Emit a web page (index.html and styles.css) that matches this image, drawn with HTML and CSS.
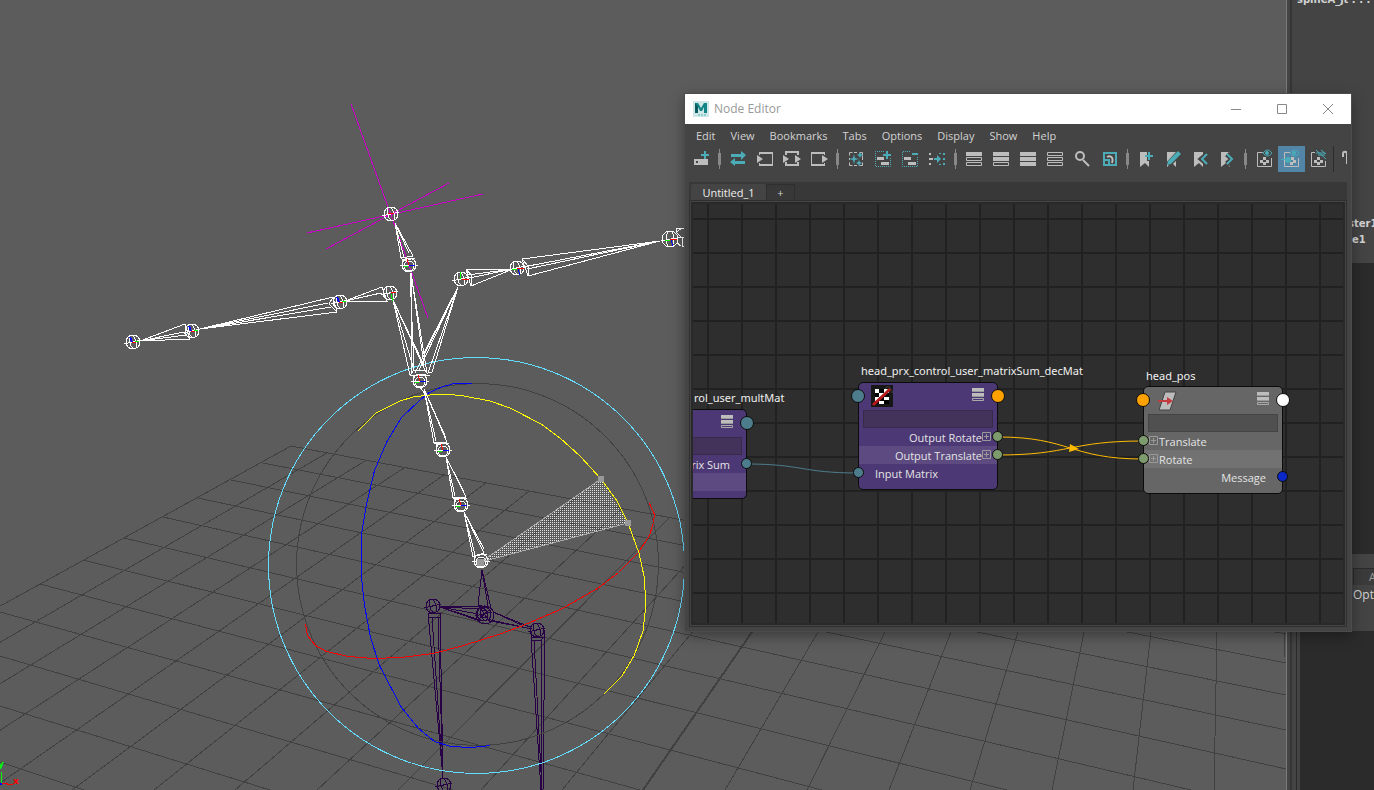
FILE: index.html
```html
<!DOCTYPE html>
<html lang="en">
<head>
<meta charset="utf-8">
<title>Node Editor</title>
<link rel="stylesheet" href="styles.css">
</head>
<body>
<svg class="defs" aria-hidden="true">
  <symbol id="joint" viewBox="-10 -10 20 20">
    <circle r="7"/><ellipse rx="3" ry="7" transform="rotate(-14)"/><path d="M-9 2L8-2"/>
  </symbol>
  <symbol id="knuckle" viewBox="-10 -10 20 20">
    <circle r="7"/><circle cy="1" r="5"/><path d="M-9 0H9M-7-5L6-7M-7-5V2"/>
  </symbol>
  <symbol id="axis" viewBox="-10 -10 20 20">
    <path d="M-1 0L-3-5" stroke="#00f" stroke-width="2"/><path d="M-1 0H3" stroke="#f00"/><path d="M2-1H6" stroke="#0f0"/>
  </symbol>
  <symbol id="axis-up" viewBox="-10 -10 20 20">
    <path d="M0 0L-2-6" stroke="#f00"/><path d="M-5 1H-1" stroke="#0f0"/><path d="M0 0H6" stroke="#00f"/>
  </symbol>
  <symbol id="axis-right" viewBox="-10 -10 20 20">
    <path d="M1 1L3 7" stroke="#00f"/><path d="M0 0H7" stroke="#f00"/><path d="M-5 1H0" stroke="#0f0"/>
  </symbol>
  <symbol id="rows" viewBox="0 0 14 14">
    <path d="M1 0h12v3H1zM1 5h12v3H1z" fill="#bdbdbd"/><path d="M1 3h12v1H1zM1 8h12v1H1z" fill="#999"/><path d="M1.500 10.500h11v2h-11z" fill="none" stroke="#aaa"/>
  </symbol>
  <symbol id="plus" viewBox="0 0 10 10">
    <path d="M.5.5h8v8h-8zM4.500 2v5M2 4.500h5" fill="none" stroke="#999"/>
  </symbol>
</svg>

<main class="app">
  <section class="viewport" aria-label="Perspective view">
    <svg class="scene" width="1286" height="790" viewBox="0 0 1286 790">
      <defs>
        <pattern id="dots" width="2" height="2" patternUnits="userSpaceOnUse"><path d="M0 0h1v1H0z" fill="#e2e2e2"/></pattern>
      </defs>
      <g class="floor">
        <path d="M291 446L1286 634M263 463L1286 663M231 480L1286 695M198 498L1286 730M163 517L1286 769M124 538L1191 790M83 560L1007 790M40 584L822 790M0 612L640 790M0 656L453 790M0 706L270 790M0 762L84 790"/>
        <path d="M291 446L-47 632M327 453L-255 790M365 461L-174 790M404 468L-92 790M444 475L-10 790M486 483L72 790M529 491L154 790M574 500L235 790M621 509L317 790M669 518L398 790M719 528L481 790M770 538L562 790M818 632L725 790M885 632L807 790M951 632L889 790M1018 632L970 790M1084 632L1052 790M1151 632L1133 790M1217 632L1214 790M1284 632L1285 657"/>
        <path class="bold" d="M752 632L643 790"/>
      </g>
      <g class="leg">
        <use href="#joint" x="423" y="596" width="20" height="20"/>
        <use href="#joint" x="474" y="604" width="20" height="20"/>
        <use href="#joint" x="527" y="620" width="20" height="20"/>
        <use href="#joint" x="434" y="775" width="20" height="20"/>
        <circle cx="484" cy="614" r="4"/><circle cx="485" cy="615" r="9"/>
        <path d="M482 570L478 605L491 608zM482 570L488 606M478 605L490 622M491 608L478 620M440 607L484 606L484 609L440 607L474 618L480 621zM440 607L478 614M493 612L530 627M491 621L532 629L486 619M493 612L524 626"/>
        <path d="M428 613H440V617H428zM428 613L443 778M432 617L443 778L440 613M438 617L443 778M531 637H544L541 640H532zM531 637L541 790M534 640L542 790M541 640L542 790M544 637V700L543 790M532 632L531 637M544 630V637"/>
      </g>
      <g transform="translate(.5 .5)">
        <circle class="ring dark" cx="477" cy="564" r="181"/>
        <circle class="ring cyan" cx="476" cy="565" r="208"/>
        <path class="ring red" d="M305 624L307 635L315 645L326 651L348 656L372 658L400 657L433 653L463 645L498 634L520 626L560 609L597 588L618 572L638 552L649 535L653 522L654 514L649 503"/>
        <path class="ring blue" d="M471 383L453 383L440 387L427 393L419 400L401 417L386 442L374 470L366 504L361 534L361 577L364 605L370 637L379 665L391 688L401 707L418 728L434 741L450 746L471 747L490 745"/>
      </g>
      <path class="ring yellow" d="M358 431L376 413L400 401L413 397L430 395L445 394L464 396L490 401L510 408L541 424L560 438L580 456L601 479L617 501L628 523L639 553L644 576L646 604L643 631L634 656L622 676L604 694"/>
      <path class="control" d="M351 104L428 318M307 233L483 194M326 249L449 183"/>
      <g class="bone">
        <path d="M140 341L185 324L190 339zM140 341L184 332L186 335zM185 324L187 331L190 339"/>
        <path d="M200 329L333 297L337 312zM200 329L328 303M200 329L331 307M333 297L329 304L337 312"/>
        <path d="M345 301L382 287L387 301zM345 301L381 293L384 296M382 287L384 293L387 301"/>
        <path d="M393 300L410 375L414 370zM393 300L423 363M393 300L426 372M410 375H430M413 370H427"/>
        <path d="M411 273L412 373M411 273L424 365M410 273L414 370M411 273L427 373"/>
        <path d="M458 287L419 370M458 287L424 353M458 287L428 373L432 372zM458 287L415 373"/>
        <path d="M395 223L401 258L413 256zM395 223L404 258M395 223L409 253M401 258L404 261L414 258"/>
        <path d="M513 269L466 269L471 286zM513 269L469 278M513 269L468 275M466 269L472 276L471 286"/>
        <path d="M660 241L522 259L528 276zM660 241L523 267M660 241L527 269M522 259L529 267L528 276"/>
        <path d="M676 228H685M676 228V232L682 238V246H685M676 232L681 229M677 237H685M677 243L681 246"/>
        <path d="M424 389L434 443L447 442zM424 389L436 441M424 389L446 438M434 443H447"/>
        <path d="M446 457L453 498L466 497zM446 457L455 496M446 457L464 492M453 498H465"/>
        <path d="M464 512L473 557L484 553zM464 512L475 555M464 512L484 549M420 387L425 394"/>
        <use href="#joint" x="123" y="332" width="20" height="20"/>
        <use href="#joint" x="182" y="321" width="20" height="20"/>
        <use href="#joint" x="330" y="292" width="20" height="20"/>
        <use href="#joint" x="380" y="283" width="20" height="20"/>
        <use href="#joint" x="381" y="204" width="20" height="20"/>
        <use href="#knuckle" x="399" y="255" width="20" height="20"/>
        <use href="#knuckle" x="410" y="371" width="20" height="20"/>
        <use href="#joint" x="451" y="269" width="20" height="20"/>
        <use href="#joint" x="507" y="258" width="20" height="20"/>
        <circle cx="670" cy="239" r="8"/><ellipse cx="670" cy="239" rx="4" ry="8"/><path d="M661 241L682 237"/>
        <use href="#knuckle" x="433" y="440" width="20" height="20"/>
        <use href="#knuckle" x="451" y="495" width="20" height="20"/>
        <use href="#knuckle" x="471" y="551" width="20" height="20"/>
      </g>
      <use href="#axis" x="123" y="332" width="20" height="20"/><use href="#axis" x="182" y="321" width="20" height="20"/>
      <use href="#axis" x="330" y="292" width="20" height="20"/><use href="#axis-up" x="399" y="255" width="20" height="20"/>
      <use href="#axis-up" x="410" y="371" width="20" height="20"/><use href="#axis-right" x="507" y="258" width="20" height="20"/>
      <use href="#axis-right" x="660" y="229" width="20" height="20"/><use href="#axis-up" x="433" y="440" width="20" height="20"/>
      <use href="#axis-up" x="451" y="495" width="20" height="20"/>
      <path d="M460 272L461 279M391 294L393 301" stroke="#0f0"/><path d="M462 279H469M391 292H396M388 213H394" stroke="#f00"/>
      <path d="M481 562L601 479L628 523z" fill="url(#dots)"/><path d="M481 562L601 479M481 562L628 523" stroke="#aaa"/>
      <path d="M598 476h6v6h-6zM625 520h6v6h-6zM477 559h7v7h-7z" fill="#999"/>
      <path d="M1 772V783" stroke="#0f0"/><path d="M2 783L13 785" stroke="#f00" stroke-width="1"/><path d="M0 784H2" stroke="#00f" stroke-width="2"/>
      <text x="-2" y="767" class="axis-label" fill="#0f0">y</text><text x="13" y="784" class="axis-label" fill="#f00">x</text>
    </svg>
  </section>
  <div class="splitter"></div>
  <aside class="side">
    <div class="side-top"><span>spineA_jt . . .</span><span class="cut">ster1</span><span class="cut">:e1</span></div>
    <div class="side-dark"></div>
    <div class="side-tabs"><div class="side-tab">A</div><div class="side-menu">Options</div></div>
    <div class="side-rest"></div>
  </aside>

  <section class="window" aria-label="Node Editor">
    <header class="titlebar">
      <svg width="16" height="16" viewBox="0 0 16 16"><path d="M0 0h16v16H0z" fill="#cfe8e7"/><path d="M2 12V2h3l3 5 3-5h3v10h-3V6l-2 4H7L5 6v6z" fill="#138487"/><path d="M2 12V2l3 4v6z" fill="#0b5a60"/><path d="M5 14h2m1 0h2m1 0h2" stroke="#4fb5b6"/></svg>
      <h1>Node Editor</h1>
      <button aria-label="Minimize"><svg width="12" height="12"><path d="M1 6.500h10" class="sys"/></svg></button>
      <button aria-label="Maximize"><svg width="12" height="12"><path d="M1.500 1.500h9v9h-9z" class="sys"/></svg></button>
      <button aria-label="Close"><svg width="12" height="12"><path d="M1 1l10 10M11 1L1 11" class="sys"/></svg></button>
    </header>
    <nav class="menu">
      <button>Edit</button><button>View</button><button>Bookmarks</button><button>Tabs</button><button>Options</button><button>Display</button><button>Show</button><button>Help</button>
    </nav>
    <div class="toolbar">
      <button aria-label="Create node"><svg viewBox="0 0 20 20"><path class="g" fill-rule="evenodd" d="M3 10h14v6H3zM5 12v2h2v-2z"/><path class="t" d="M13 2h2v3h3v2h-3v3h-2V7h-3V5h3z"/></svg></button>
      <i class="sep"></i>
      <button aria-label="Swap direction"><svg viewBox="0 0 20 20"><path class="t" d="M3 5h10V2l5 4-5 5V8H3zM17 12H7V9l-5 4 5 4v-2h10z"/></svg></button>
      <button aria-label="Input connections"><svg viewBox="0 0 20 20"><path class="gt" d="M4.500 6V3.500h13v13h-13V14M5 3.500h12M17.500 4v12"/><path class="g" d="M2 6l6 4-6 4zM4 3h14v2H4zM4 15h14v2H4z"/></svg></button>
      <button aria-label="Input and output connections"><svg viewBox="0 0 20 20"><path class="gl" d="M4 6V3h12v3M4 13v3h12v-3"/><path class="g" d="M1 6l6 4-6 4zM13 6l6 4-6 4z"/></svg></button>
      <button aria-label="Output connections"><svg viewBox="0 0 20 20"><path class="gt" d="M15.500 6V3.500h-13v13h13V14"/><path class="g" d="M13 6l6 4-6 4zM2 3h14v2H2zM2 15h14v2H2z"/></svg></button>
      <i class="sep"></i>
      <button aria-label="Clear graph"><svg viewBox="0 0 20 20"><path class="gt" d="M3.500 6.500v-3h3M13.500 3.500h3v3M16.500 13.500v3h-3M6.500 16.500h-3v-3M3.500 9v2M16.500 7v4M8 3.500h3M8 16.500h3"/><path class="t" d="M8 5l1 4 4 1-4 1-1 4-1-4-4-1 4-1zM14 3l1 2 2 1-2 1-1 2-1-2-2-1 2-1zM13 11l1 2 2 1-2 1-1 2-1-2-2-1 2-1z"/></svg></button>
      <button aria-label="Add selected nodes"><svg viewBox="0 0 20 20"><path class="tl" stroke-dasharray="1 1" d="M11 2.500H2.500v15h15V9"/><path class="g" d="M4 8h7v3H4zM8 13h8v3H8z"/><path class="t" d="M13 2h2v3h3v2h-3v3h-2V7h-3V5h3z"/></svg></button>
      <button aria-label="Remove selected nodes"><svg viewBox="0 0 20 20"><path class="tl" stroke-dasharray="1 1" d="M10 2.500H2.500v15h15V8"/><path class="g" d="M4 8h7v3H4zM8 13h8v3H8z"/><path class="t" d="M12 4h6v2h-6z"/></svg></button>
      <button aria-label="Rearrange graph"><svg viewBox="0 0 20 20"><path class="g" d="M2 4h2v2H2zM2 9h4v2H2zM2 14h2v2H2z"/><path class="t" d="M7 9h3V6l4 4-4 4v-3H7zM16 4h2v2h-2zM16 9h2v2h-2zM16 14h2v2h-2zM12 4h2v1h-2zM12 15h2v1h-2z"/></svg></button>
      <i class="sep"></i>
      <button aria-label="Simple mode"><svg viewBox="0 0 20 20"><path class="g" d="M2 3h16v4H2z"/><path class="gt" d="M2.500 8.500h15v3h-15zM2.500 13.500h15v3h-15z"/></svg></button>
      <button aria-label="Connected mode"><svg viewBox="0 0 20 20"><path class="g" d="M2 3h16v4H2zM2 8h16v4H2z"/><path class="gt" d="M2.500 13.500h15v3h-15z"/></svg></button>
      <button aria-label="Full mode"><svg viewBox="0 0 20 20"><path class="g" d="M2 3h16v4H2zM2 8h16v4H2zM2 13h16v4H2z"/></svg></button>
      <button aria-label="Custom attributes"><svg viewBox="0 0 20 20"><path class="gt" d="M2.500 3.500h15v3h-15zM2.500 8.500h15v3h-15zM2.500 13.500h15v3h-15z"/></svg></button>
      <button aria-label="Search"><svg viewBox="0 0 20 20"><circle class="gl" cx="8" cy="7" r="4"/><path class="gl" d="M11 11l6 6" stroke-width="3"/></svg></button>
      <button aria-label="Zoom to selected"><svg viewBox="0 0 20 20"><path class="tl thick" d="M5 10V4h12v12h-6M5 11h5v5H5z"/><path class="gl" d="M8 8c3-2 7 0 5 6"/></svg></button>
      <i class="sep"></i>
      <button aria-label="Create bookmark"><svg viewBox="0 0 20 20"><path class="g" d="M4 3h9v15l-4-4-5 4z"/><path class="k" d="M11 1h4v3h4v5h-4v3h-4z"/><path class="t" d="M12 3h2v3h3v2h-3v3h-2V8H9V6h3z"/></svg></button>
      <button aria-label="Edit bookmark"><svg viewBox="0 0 20 20"><path class="g" d="M4 3h9v15l-4-4-5 4z"/><path d="M5 16L17 3" stroke="#444" stroke-width="6"/><path class="t" d="M4 16l1-4L15 2l3 3L8 15z"/></svg></button>
      <button aria-label="Previous bookmark"><svg viewBox="0 0 20 20"><path class="g" d="M4 3h9v15l-4-4-5 4z"/><path d="M18 5l-6 5 6 5" fill="none" stroke="#444" stroke-width="6"/><path class="tl thick" d="M17 5l-5 5 5 5"/></svg></button>
      <button aria-label="Next bookmark"><svg viewBox="0 0 20 20"><path class="g" d="M4 3h9v15l-4-4-5 4z"/><path d="M10 5l6 5-6 5" fill="none" stroke="#444" stroke-width="6"/><path class="tl thick" d="M10 5l5 5-5 5"/></svg></button>
      <i class="sep"></i>
      <button aria-label="Show swatches"><svg viewBox="0 0 20 20"><path class="gt" d="M9 3.500H3.500v14h14V9"/><path class="g" d="M9 8h3v3H9zM6 11h3v3H6zM12 11h3v3h-3zM9 13h3v3H9z"/><path class="k" d="M8 4l5-3h5v6l-4 2z"/><path class="tl" d="M9 4c3-4 6-4 9 0-3 4-6 4-9 0z"/><circle class="t" cx="13" cy="4" r="2"/></svg></button>
      <button class="active" aria-label="Show inputs" aria-pressed="true"><svg viewBox="0 0 20 20"><path class="gt" d="M9 3.500H3.500v14h14V9"/><path class="g" d="M10 8h3v3h-3zM12 11h3v3h-3zM9 13h3v3H9z"/><path class="t" d="M0 10h5v1H0z"/><circle class="t" cx="7" cy="11" r="3"/><path class="tl" d="M9 4c3-4 6-4 9 0-3 4-6 4-9 0z"/><circle class="t" cx="13" cy="4" r="2"/></svg></button>
      <button aria-label="Hide inputs"><svg viewBox="0 0 20 20"><path class="gt" d="M7 3.500H3.500v14h14V12"/><path class="g" d="M9 8h3v3H9zM6 11h3v3H6zM12 11h3v3h-3zM9 13h3v3H9z"/><path class="k" d="M8 3l9 1 1 6-5-2z"/><path class="tl" d="M8 4h9M8 1l10 9M10 6h7M13 1l5 4"/></svg></button>
      <i class="rule"></i>
      <button class="partial" aria-label="Lock"><svg viewBox="0 0 7 20"><path class="gl" d="M1 8V5c0-3 4-3 4 0v10"/></svg></button>
    </div>
    <div class="tabs">
      <button class="tab current">Untitled_1</button><button class="tab" aria-label="New tab">+</button>
    </div>
    <div class="frame">
      <div class="canvas">
        <svg class="wires" width="650" height="419" viewBox="693 204 650 419">
          <path d="M747 464C802 464 802 473 858 473" stroke="#4d7d8c"/>
          <path d="M998 437C1070 437 1070 459 1143 459M998 455C1070 455 1070 441 1143 441" stroke="#fb0"/>
          <path d="M1070 444l9 5-10 3z" fill="#fb0"/>
        </svg>
        <article class="node purple mult">
          <h2>rol_user_multMat</h2>
          <div class="head"><svg class="mode"><use href="#rows"/></svg></div>
          <div class="field"></div>
          <div class="row out wide">rix Sum</div>
          <div class="row alt"></div>
          <i class="port big teal right"></i><i class="port teal right p1"></i>
        </article>
        <article class="node purple dec">
          <h2>head_prx_control_user_matrixSum_decMat</h2>
          <div class="head">
            <svg class="swatch" viewBox="0 0 22 22"><path d="M0 0h22v22H0z" fill="#171717"/><path d="M4 4h14v15H4z" fill="#fff"/><path d="M8 4h5v4H8zM4 8h4v4H4zM13 8h5v4h-5zM8 12h5v4H8zM4 16h4v3H4zM13 15h5v4h-5z" fill="#050505"/><path d="M14 4c1-3 5-3 5-1s3 2 2 5" fill="none" stroke="#444"/><path d="M2 20L15 8l4-4" stroke="#b51a1c" stroke-width="3"/></svg>
            <svg class="mode"><use href="#rows"/></svg>
          </div>
          <div class="field"></div>
          <div class="row out">Output Rotate<svg class="plus"><use href="#plus"/></svg></div>
          <div class="row out alt">Output Translate<svg class="plus"><use href="#plus"/></svg></div>
          <div class="row in">Input Matrix</div>
          <i class="port big teal left"></i><i class="port big orange right"></i>
          <i class="port green right p1"></i><i class="port green right p2"></i><i class="port teal left p3"></i>
        </article>
        <article class="node gray pos">
          <h2>head_pos</h2>
          <div class="head">
            <svg class="swatch" viewBox="0 0 22 22"><path d="M9 3h11l-6 18H3z" fill="#bcbcbc" stroke="#444"/><path d="M2 11h9V8l6 4-6 4v-3H2z" fill="#c43b3e"/></svg>
            <svg class="mode"><use href="#rows"/></svg>
          </div>
          <div class="field"></div>
          <div class="row xin"><svg class="plus"><use href="#plus"/></svg>Translate</div>
          <div class="row xin alt"><svg class="plus"><use href="#plus"/></svg>Rotate</div>
          <div class="row out wide">Message</div>
          <i class="port big orange left"></i><i class="port big white right"></i>
          <i class="port green left p1"></i><i class="port green left p2"></i><i class="port navy right p3"></i>
        </article>
      </div>
    </div>
  </section>
</main>
</body>
</html>
```
FILE: styles.css
```css
* { box-sizing: border-box; }
body {
  margin: 0;
  overflow: hidden;
  background: #2b2b2b;
  color: #d2d2d2;
  font: 11px/16px "Open Sans", "Noto Sans", sans-serif;
}
button {
  margin: 0;
  padding: 0;
  border: 0;
  background: none;
  color: inherit;
  font: inherit;
}
h1, h2 { margin: 0; font-weight: 400; }
.defs { position: absolute; width: 0; height: 0; }
.app { position: relative; display: flex; height: 100vh; }

/* 3D view */
.viewport { flex: 1; min-width: 0; overflow: hidden; background: #5c5c5c; }
.scene { display: block; fill: none; shape-rendering: crispEdges; }
.floor path { stroke: #414141; }
.floor .bold { stroke-width: 2; }
.ring { fill: none; stroke-width: 1; }
.dark { stroke: #414141; }
.cyan { stroke: #64dcff; }
.red { stroke: #f00; }
.blue { stroke: #00f; }
.yellow { stroke: #ff0; }
.control { stroke: #c800c8; }
.bone { stroke: #fff; }
.leg { stroke: #280046; }
.axis-label { font: bold 9px "DejaVu Sans", sans-serif; }

/* docked column */
.splitter {
  width: 6px;
  border-left: 1px solid #7c7c7c;
  background: linear-gradient(90deg, #444 3px, #353535 3px);
}
.side { display: flex; flex-direction: column; width: 82px; background: #444; overflow: hidden; }
.side-top {
  display: flex;
  flex-direction: column;
  height: 263px;
  font: bold 10px/16px "DejaVu Sans", sans-serif;
  white-space: nowrap;
}
.side-top span:first-child { margin: -8px 0 208px 5px; }
.side-top .cut { padding-left: 56px; }
.side-dark { height: 291px; background: #2b2b2b; }
.side-tabs { height: 77px; padding: 14px 0 0 61px; overflow: hidden; }
.side-tab { height: 17px; padding-left: 15px; border: solid #2b2b2b; border-width: 1px 0 0 1px; background: #3b3b3b; color: #999; }
.side-menu { height: 20px; line-height: 20px; font-size: 12px; }
.side-rest { flex: 1; background: linear-gradient(90deg, #444 4px, #2b2b2b 4px, #2b2b2b 5px, #444 5px, #444 8px, #2b2b2b 8px); }

/* floating window */
.window {
  position: absolute;
  left: 685px;
  top: 94px;
  display: flex;
  flex-direction: column;
  width: 666px;
  height: 537px;
  background: #444;
  box-shadow: 0 0 0 1px #4c4c4c, 0 4px 14px rgba(0, 0, 0, .4);
}
.titlebar { display: flex; align-items: center; height: 30px; padding-left: 8px; background: #fff; color: #999; }
.titlebar h1 { flex: 1; padding-left: 5px; font-size: 12px; }
.titlebar button { width: 46px; height: 30px; display: grid; place-items: center; }
.sys { fill: none; stroke: #888; }
.menu { display: flex; gap: 15px; height: 22px; padding: 4px 11px 0; }
.menu button { height: 16px; }
.toolbar { display: flex; align-items: center; height: 26px; margin: 0 4px 0 3px; overflow: hidden; }
.toolbar button { flex: none; width: 27px; height: 26px; padding-left: 3px; display: grid; align-items: center; justify-items: start; }
.toolbar svg { width: 20px; height: 20px; }
.toolbar .active { background: #5285a6; }
.toolbar .partial { width: 7px; padding: 0; }
.toolbar .partial svg { width: 7px; }
.sep { flex: none; width: 10px; height: 20px; background: linear-gradient(#888, #888) 4px 0/1px 20px no-repeat, linear-gradient(#888, #888) 3px 4px/3px 12px no-repeat; }
.rule { flex: none; width: 1px; height: 26px; margin: 0 8px 0 1px; background: #2b2b2b; }
.g { fill: #bdbdbd; }
.t { fill: #4bacb8; }
.k { fill: #444; }
.gl { fill: none; stroke: #bdbdbd; stroke-width: 2; }
.gt { fill: none; stroke: #bdbdbd; }
.tl { fill: none; stroke: #4bacb8; stroke-width: 1; }
.tl.thick { stroke-width: 2; }
.tabs { display: flex; height: 18px; margin: 10px 4px 0; padding: 2px 0 0 2px; background: #383838; }
.tab { width: 29px; border: 1px solid #2f2f2f; border-bottom: 0; border-radius: 2px 2px 0 0; line-height: 16px; }
.tab.current { width: 75px; background: #444; border-color: #444; color: #eee; }
.frame { flex: 1; min-height: 0; margin: 0 4px 4px; padding: 1px; border: 1px solid #2f2f2f; background: #444; }
.canvas {
  position: relative;
  height: 100%;
  overflow: hidden;
  border: 2px solid #292929;
  background:
    linear-gradient(90deg, #212121 2px, transparent 2px) 14px 0 / 34px 34px,
    linear-gradient(#212121 2px, transparent 2px) 0 14px / 34px 34px,
    #2e2e2e;
}
.wires { position: absolute; left: 0; top: 0; fill: none; }

/* graph nodes */
.node { position: absolute; width: 140px; padding-bottom: 7px; border: 1px solid #0c0c0c; border-radius: 5px; color: #e4e4e4; white-space: nowrap; }
.node h2 { position: absolute; left: 2px; top: -21px; font: 11px/18px "Noto Sans", sans-serif; color: #f0f0f0; }
.purple { background: #4c3874; }
.gray { background: #666; }
.dec { left: 165px; top: 178px; }
.pos { left: 450px; top: 182px; }
.mult { left: -86px; top: 205px; }
.node.mult h2 { left: 86px; }
.node.pos h2 { top: -20px; }
.head { display: flex; align-items: center; height: 26px; padding: 0 12px; }
.swatch { width: 22px; height: 22px; }
.mode { width: 14px; height: 14px; margin-left: auto; margin-bottom: 2px; }
.field { height: 18px; margin: 1px 4px 0; border: 1px solid rgba(0, 0, 0, .15); background: #43325a; }
.gray .field { background: #505050; }
.row { display: flex; align-items: flex-end; height: 18px; }
.purple .alt { background: #5c4a80; }
.gray .alt { background: #727272; }
.out { justify-content: flex-end; padding-right: 5px; }
.out.wide { padding-right: 16px; }
.in { padding-left: 16px; }
.xin { padding-left: 5px; }
.plus { width: 10px; height: 10px; margin-bottom: 4px; }
.port { position: absolute; width: 11px; height: 11px; border: 1px solid #0c0c0c; border-radius: 50%; }
.port.left { left: -6px; }
.port.right { right: -6px; }
.port.big { width: 14px; height: 14px; top: 6px; }
.port.big.left { left: -8px; }
.port.big.right { right: -8px; }
.p1 { top: 48px; }
.p2 { top: 66px; }
.p3 { top: 84px; }
.teal { background: #4d7d8c; }
.orange { background: #ffa200; }
.green { background: #7d9b6c; }
.white { background: #fff; }
.navy { background: #0a28c8; }
```
